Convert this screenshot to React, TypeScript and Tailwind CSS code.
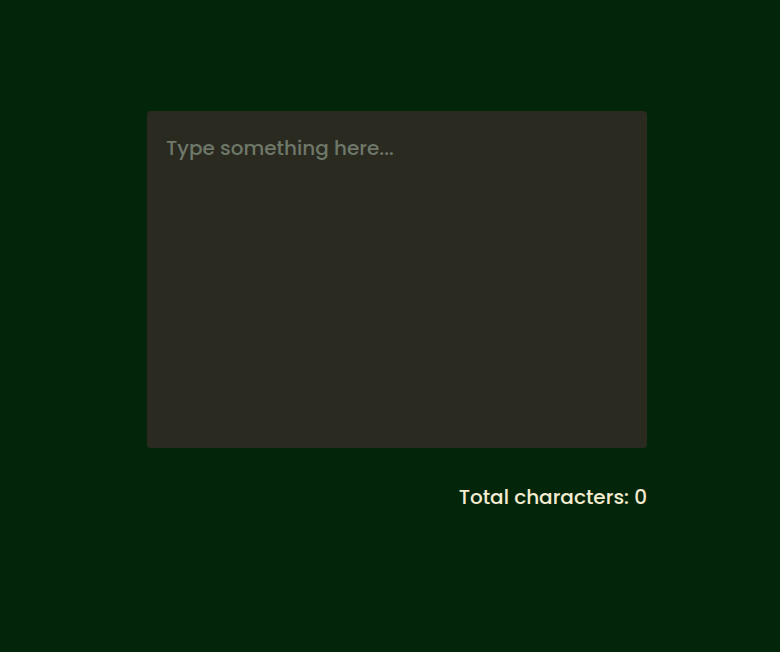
import React, { useState } from "react";

export default function App() {
  const [text, setText] = useState("");
  return (
    <div
      className="w-full h-[652px] bg-[#03260b] flex flex-col items-center pt-[111px] pl-[14px]"
      style={{ fontFamily: '"Poppins", "Open Sans", sans-serif' }}
    >
      <div className="w-[500px] flex flex-col">
        <textarea
          value={text}
          onChange={(e) => setText(e.target.value)}
          placeholder="Type something here..."
          className="w-[500px] h-[337px] bg-[#2b2a20] rounded-[4px] px-[19px] pt-[23px] pb-[22px] text-[20px] font-medium leading-[28px] text-[#f4ecd0] placeholder:text-[#6e786a] outline-none resize-none border-0"
        />
        <div className="mt-[35px] text-right text-[20px] font-medium text-[#f4ecd0] leading-[28px]">
          Total characters: {text.length}
        </div>
      </div>
    </div>
  );
}
